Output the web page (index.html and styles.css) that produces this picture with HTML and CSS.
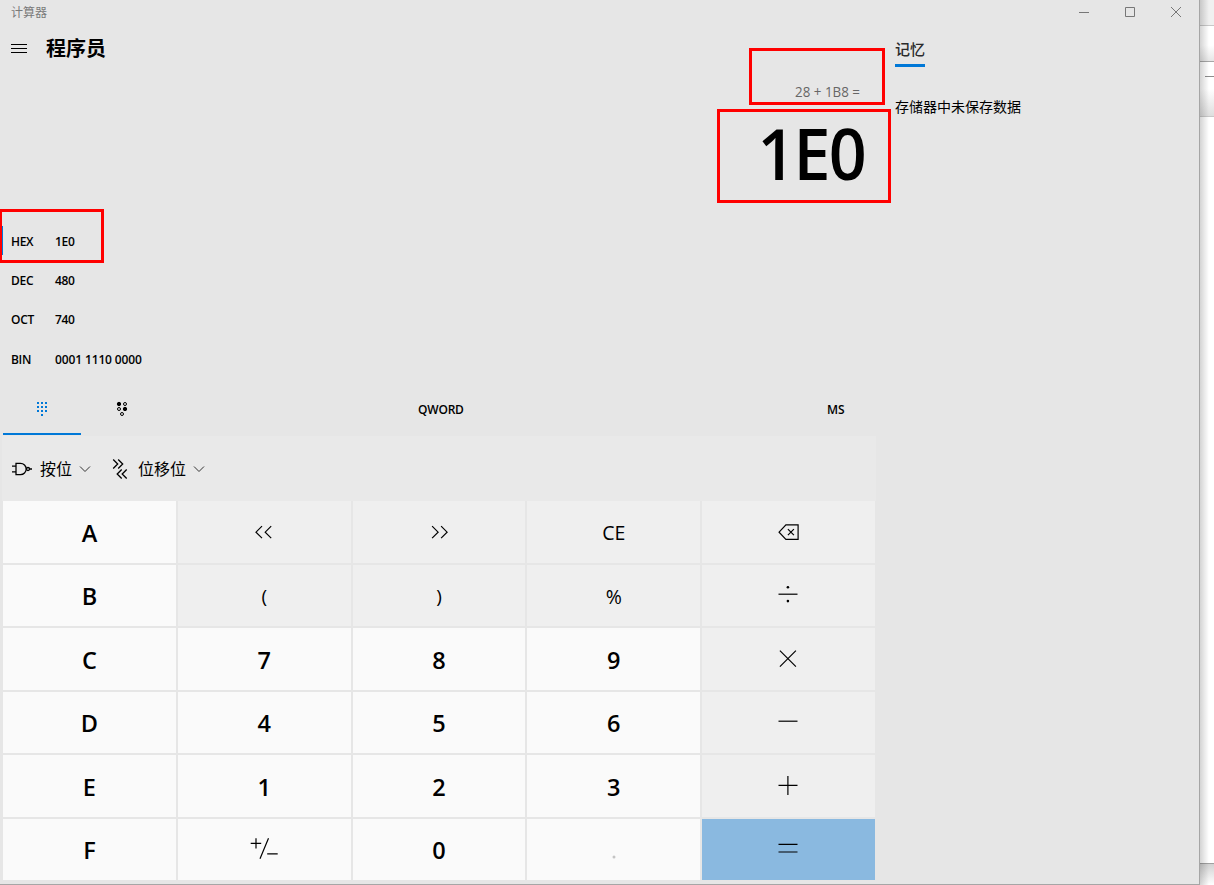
FILE: index.html
```html
<!DOCTYPE html>
<html lang="zh-CN">
<head>
<meta charset="utf-8">
<title>计算器</title>
<link rel="stylesheet" href="styles.css">
</head>
<body>
<div class="desktop">
  <div class="window">
    <header class="titlebar">
      <span class="title">计算器</span>
      <svg class="captions" width="138" height="25" viewBox="0 0 138 25">
        <path d="M18 12.5h10M64.500 7.500h9v9h-9z M110 7l10 10M120 7l-10 10"/>
      </svg>
    </header>
    <div class="body">
      <main class="calc">
        <div class="nav">
          <svg class="menu" width="16" height="10" viewBox="0 0 16 10"><path d="M0 .5h16M0 4.500h16M0 8.500h16"/></svg>
          <h1>程序员</h1>
        </div>
        <div class="expression"><span>28 + 1B8 =</span></div>
        <div class="result"><span>1E0</span></div>
        <div class="bases">
          <div class="base active"><span class="radix">HEX</span><span class="value">1E0</span></div>
          <div class="base"><span class="radix">DEC</span><span class="value">480</span></div>
          <div class="base"><span class="radix">OCT</span><span class="value">740</span></div>
          <div class="base binary"><span class="radix">BIN</span><span class="value">0001 1110 0000</span></div>
        </div>
        <div class="modes">
          <div class="mode selected">
            <svg width="12" height="16" viewBox="0 0 12 16"><path d="M1 1h2v2H1zM5 1h2v2H5zM9 1h2v2H9zM1 5h2v2H1zM5 5h2v2H5zM9 5h2v2H9zM1 9h2v2H1zM5 9h2v2H5zM9 9h2v2H9zM5 13h2v2H5z"/></svg>
          </div>
          <div class="mode">
            <svg width="12" height="16" viewBox="0 0 12 16"><g class="ring"><circle cx="3" cy="3" r="1.700" class="full"/><circle cx="9" cy="3" r="1.500"/><circle cx="3" cy="8" r="1.500"/><circle cx="9" cy="8" r="1.700" class="full"/><circle cx="6" cy="13" r="1.500"/></g></svg>
          </div>
          <div class="word">QWORD</div>
          <div class="store">MS</div>
        </div>
        <div class="operators">
          <svg class="gate" width="22" height="16" viewBox="0 0 22 16"><path d="M5 2.300h4.500a5.700 5.700 0 0 1 0 11.400H5zM1 5.200h4M1 10.800h4M18.200 8h2.800"/><circle cx="17" cy="8" r="1.500"/></svg>
          <span class="op-name">按位</span>
          <svg class="chevron" width="12" height="8" viewBox="0 0 12 8"><path d="M1 1.500l5 5 5-5"/></svg>
          <svg class="shift" width="16" height="22" viewBox="0 0 16 22"><path d="M1.200 1.500l4.500 4.500-4.500 4.500M6.200 1.500L10.700 6l-4.500 4.500M9.700 11.500L5.200 16l4.500 4.500M14.700 11.500L10.200 16l4.500 4.500"/></svg>
          <span class="op-name">位移位</span>
          <svg class="chevron" width="12" height="8" viewBox="0 0 12 8"><path d="M1 1.500l5 5 5-5"/></svg>
        </div>
        <div class="keys">
          <div class="key num">A</div>
          <div class="key"><svg viewBox="-15 -15 30 30"><path d="M-2-5.800l-6 6 6 6M7.200-5.800l-6 6 6 6"/></svg></div>
          <div class="key"><svg viewBox="-15 -15 30 30"><path d="M-6.900-5.800l6 6-6 6M2.100-5.800l6 6-6 6"/></svg></div>
          <div class="key func">CE</div>
          <div class="key"><svg viewBox="-15 -15 30 30"><path d="M-9.900.2l6.800-7.300H9.100V7.300H-3.100zM-1.100-2.800l6 6M4.900-2.800l-6 6"/></svg></div>

          <div class="key num">B</div>
          <div class="key func paren">(</div>
          <div class="key func paren">)</div>
          <div class="key func percent">%</div>
          <div class="key"><svg viewBox="-15 -15 30 30"><path d="M-10.500-.8H8.500"/><circle cx="-1.100" cy="-7.700" r="1.300" class="dot"/><circle cx="-1.100" cy="6.100" r="1.300" class="dot"/></svg></div>

          <div class="key num">C</div><div class="key num">7</div><div class="key num">8</div><div class="key num">9</div>
          <div class="key"><svg viewBox="-15 -15 30 30"><path d="M-9.100-8.300l16 16M6.900-8.300l-16 16"/></svg></div>

          <div class="key num">D</div><div class="key num">4</div><div class="key num">5</div><div class="key num">6</div>
          <div class="key"><svg viewBox="-15 -15 30 30"><path d="M-10.500-.8H8.500"/></svg></div>

          <div class="key num">E</div><div class="key num">1</div><div class="key num">2</div><div class="key num">3</div>
          <div class="key"><svg viewBox="-15 -15 30 30"><path d="M-10.500-.6H8.500M-1.100-10V9"/></svg></div>

          <div class="key num">F</div>
          <div class="key light"><svg viewBox="-15 -15 30 30"><path d="M-13.300-5.600h10.500M-8-10.800V-.4M4.500-10.800L-4 9.700M3.200 4.900h10.500"/></svg></div>
          <div class="key num">0</div>
          <div class="key light"><svg viewBox="-15 -15 30 30"><circle cx="0" cy="8" r="1.500" class="point"/></svg></div>
          <div class="key equals"><svg viewBox="-15 -15 30 30"><path d="M-10.500-4.600H8.500M-10.500 3H8.500"/></svg></div>
        </div>
      </main>
      <aside class="memory">
        <h2>记忆</h2>
        <p>存储器中未保存数据</p>
      </aside>
    </div>
  </div>
  <div class="behind">
    <div class="pane tab"></div>
    <div class="pane bar"></div>
    <div class="pane tools"><i></i></div>
    <div class="pane page"></div>
    <div class="pane below"></div>
  </div>
  <div class="mark mark-expression"></div>
  <div class="mark mark-result"></div>
  <div class="mark mark-hex"></div>
</div>
</body>
</html>
```

FILE: styles.css
```css
* { box-sizing: border-box; }
body {
  margin: 0;
  color: #000;
  font-family: "Open Sans", "Noto Sans CJK SC", sans-serif;
}
svg { display: block; fill: none; stroke: #000; flex: none; }
.desktop {
  position: relative;
  display: flex;
  width: 1214px;
  height: 885px;
  overflow: hidden;
  background: #fff;
}
.window {
  width: 1200px;
  background: #e6e6e6;
  border-right: 1px solid #a6a6a6;
  border-bottom: 1px solid #a6a6a6;
}
.titlebar {
  display: flex;
  justify-content: space-between;
  height: 25px;
  padding-left: 11px;
}
.title { font-size: 12px; line-height: 25px; color: #7a7a7a; }
.captions { stroke: #777; }
.body { display: flex; }
.calc { width: 876px; }

.nav { display: flex; align-items: center; height: 47px; padding-left: 11px; }
.menu { margin-right: 19px; }
h1 { margin: 0; font-size: 20px; line-height: 47px; font-weight: 700; }
.expression {
  height: 38px;
  padding-right: 16px;
  text-align: right;
  font-size: 14px;
  line-height: 39px;
  color: #666;
}
.result {
  height: 112px;
  padding-right: 11px;
  text-align: right;
  font-size: 71px;
  line-height: 86px;
  font-weight: 600;
  letter-spacing: -2px;
}
.expression span, .result span { display: inline-block; transform-origin: right center; }
.expression span { transform: scaleX(.955); }
.result span { transform: scaleX(.935); }

.bases { height: 162px; }
.base {
  display: flex;
  align-items: center;
  height: 39px;
  padding-left: 11px;
  font-size: 12px;
  font-weight: 600;
  letter-spacing: -.3px;
}
.radix { width: 44px; }
.binary { height: 41px; }
.binary .value { letter-spacing: -.13px; }
.active {
  background: linear-gradient(#0078d7, #0078d7) 2px 4px / 1px 29px no-repeat;
}

.modes {
  display: flex;
  height: 52px;
  padding-left: 3px;
  font-size: 12px;
  font-weight: 600;
  line-height: 52px;
}
.mode { display: flex; justify-content: center; width: 78px; height: 51px; padding-top: 17px; }
.mode + .mode { margin-left: 2px; }
.selected { border-bottom: 2px solid #0078d7; }
.selected svg { fill: #0078d7; stroke: none; }
.ring { stroke-width: 1; }
.full { fill: #000; }
.word { width: 47px; margin-left: 257px; letter-spacing: -.2px; }
.store { margin-left: 362px; letter-spacing: -.1px; }

.operators {
  display: flex;
  align-items: center;
  height: 65px;
  margin-left: 2px;
  padding-left: 9px;
  background: #e9e9e9;
}
.gate { stroke-width: 1.300; }
.shift { margin: 0 10px 0 21px; stroke-width: 1.300; }
.op-name { font-size: 16px; line-height: 24px; }
.gate + .op-name { margin-left: 7px; }
.chevron { margin-left: 7px; stroke: #333; }

.keys {
  display: grid;
  grid-template-columns: repeat(5, 1fr);
  grid-template-rows: repeat(6, 1fr);
  gap: 2px;
  height: 379px;
  margin: 0 1px 0 3px;
}
.key {
  display: flex;
  align-items: center;
  justify-content: center;
  background: #efefef;
  min-height: 0;
}
.key svg { width: 30px; height: 30px; stroke-width: 1.200; }
.num { background: #fafafa; font-size: 23.500px; font-weight: 600; padding-top: 2px; }
.light { background: #fafafa; }
.func { font-size: 19.500px; padding-top: 1px; }
.paren { font-size: 19px; padding-top: 2px; }
.percent { padding-top: 3px; }
.dot { fill: #000; stroke: none; }
.point { fill: #c4c4c4; stroke: none; }
.equals { background: #8ab9e0; }

.memory { padding: 12px 0 0 19px; }
h2 {
  width: 30px;
  height: 30px;
  margin: 0;
  border-bottom: 3px solid #0078d7;
  font-size: 15px;
  line-height: 25px;
  font-weight: 500;
  color: #2b2b2b;
  white-space: nowrap;
}
.memory p { margin: 29px 0 0; font-size: 14px; line-height: 22px; }

.behind { position: relative; width: 14px; }
.behind::before {
  content: "";
  position: absolute;
  inset: 0 auto 0 0;
  width: 9px;
  background: linear-gradient(90deg, rgba(0,0,0,.17), transparent);
}
.pane { border-bottom: 1px solid #c8c8c8; }
.tab { height: 26px; background: #f0f0f0; }
.bar { height: 36px; border-color: #a6a6a6; background: linear-gradient(#fff 55%, #e6e6e6); }
.tools { height: 55px; padding: 14px 0 0 5px; background: linear-gradient(#fff 50%, #dedede); }
.tools i { display: block; height: 1px; background: #8c8c8c; }
.page { height: 747px; border-color: #a0a0a0; background: #fff; }
.below { height: 21px; border: 0; background: linear-gradient(#d2d2d2, #fff); }

.mark { position: absolute; border: 3px solid #f00; }
.mark-expression { left: 749px; top: 48px; width: 136px; height: 57px; }
.mark-result { left: 717px; top: 109px; width: 174px; height: 94px; }
.mark-hex { left: -1px; top: 209px; width: 105px; height: 54px; }
```
